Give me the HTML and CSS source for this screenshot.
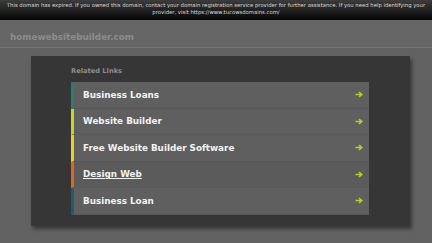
FILE: index.html
```html
<!DOCTYPE html>
<html>
<head>
<meta charset="utf-8">
<link rel="stylesheet" href="styles.css">
</head>
<body>
<div class="topbar">This domain has expired. If you owned this domain, contact your domain registration service provider for further assistance. If you need help identifying your provider, visit https://www.tucowsdomains.com/</div>
<div class="header"><span class="domain">homewebsitebuilder.com</span></div>
<div class="main">
  <div class="panel">
    <div class="related">Related Links</div>
    <ul class="links">
      <li class="link c1"><span class="label">Business Loans</span><svg class="arrow" viewBox="0 0 8 7"><path d="M0.5 3.5H6.5M4 1L6.8 3.5L4 6" /></svg></li>
      <li class="link c2"><span class="label">Website Builder</span><svg class="arrow" viewBox="0 0 8 7"><path d="M0.5 3.5H6.5M4 1L6.8 3.5L4 6" /></svg></li>
      <li class="link c3"><span class="label">Free Website Builder Software</span><svg class="arrow" viewBox="0 0 8 7"><path d="M0.5 3.5H6.5M4 1L6.8 3.5L4 6" /></svg></li>
      <li class="link c4"><span class="label under">Design Web</span><svg class="arrow" viewBox="0 0 8 7"><path d="M0.5 3.5H6.5M4 1L6.8 3.5L4 6" /></svg></li>
      <li class="link c5"><span class="label">Business Loan</span><svg class="arrow" viewBox="0 0 8 7"><path d="M0.5 3.5H6.5M4 1L6.8 3.5L4 6" /></svg></li>
    </ul>
  </div>
</div>
</body>
</html>
```
FILE: styles.css
```css
html, body {
  margin: 0;
  padding: 0;
}
body {
  background: #626262;
  font-family: "DejaVu Sans", sans-serif;
  width: 432px;
  height: 243px;
  overflow: hidden;
}
.topbar {
  height: 20px;
  box-sizing: border-box;
  padding: 2px 3px 0;
  background: linear-gradient(#3c3c3c, #050505);
  color: #dcdcdc;
  font-size: 5.3px;
  line-height: 7px;
  text-align: center;
}
.header {
  height: 28px;
  box-sizing: border-box;
  padding: 12px 0 0 10px;
  background: #666666;
  border-bottom: 1px solid #737373;
}
.domain {
  display: block;
  color: #8c8c8c;
  font-weight: bold;
  font-size: 8.8px;
  line-height: 11px;
}
.main {
  padding: 8px 0 0 31px;
}
.panel {
  width: 379px;
  height: 170px;
  box-sizing: border-box;
  padding: 10px 41px 0 40px;
  background: #363636;
  box-shadow: 2px 3px 4px rgba(0, 0, 0, 0.45);
}
.related {
  color: #8e8e8e;
  font-weight: bold;
  font-size: 6.7px;
  line-height: 10px;
  height: 16px;
}
.links {
  list-style: none;
  margin: 0;
  padding: 0;
}
.link {
  display: flex;
  align-items: center;
  justify-content: space-between;
  height: 26.5px;
  box-sizing: border-box;
  padding: 0 6px 0 9px;
  background: #5f5f5f;
  border-left: 3px solid #2a8270;
  border-bottom: 1px solid #585858;
}
.c1 { border-left-color: #26806e; }
.c2 { border-left-color: #c3d52d; }
.c3 { border-left-color: #e6d41f; }
.c4 { border-left-color: #de6914; background: #5b5b5b; }
.c5 { border-left-color: #1f5a76; }
.label {
  color: #f2f2f2;
  font-weight: bold;
  font-size: 8.8px;
}
.under {
  text-decoration: underline;
}
.arrow {
  width: 8px;
  height: 7px;
  fill: none;
  stroke: #b4d21e;
  stroke-width: 1.6;
}
```
